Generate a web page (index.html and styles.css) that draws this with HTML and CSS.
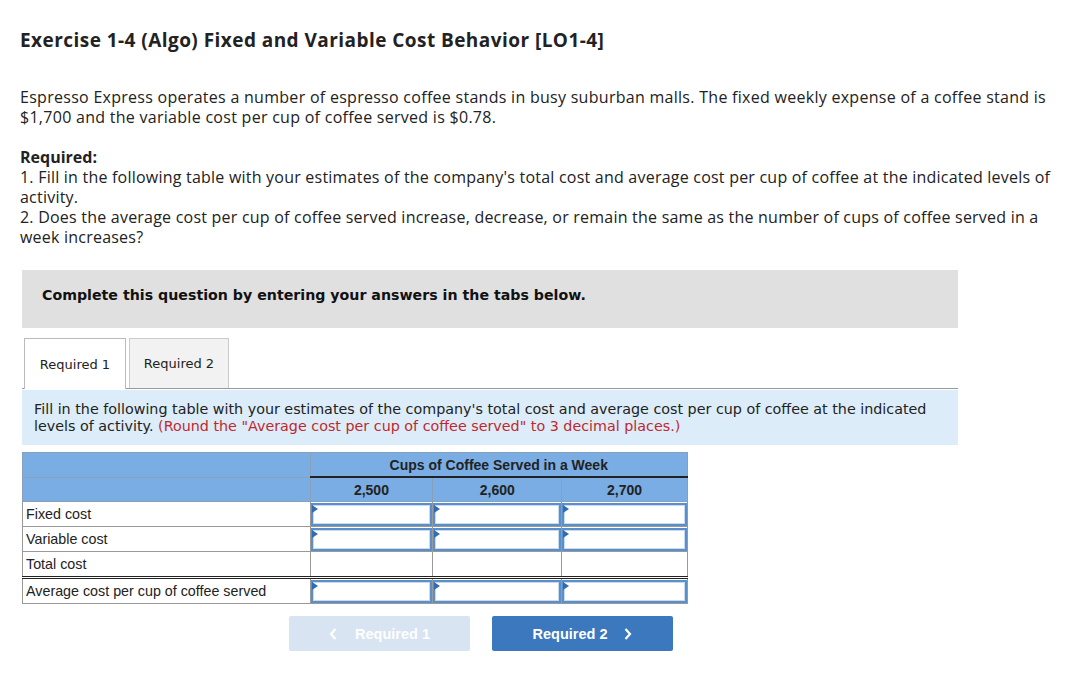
FILE: index.html
```html
<!DOCTYPE html>
<html>
<head>
<meta charset="utf-8">
<link rel="stylesheet" href="styles.css">
</head>
<body>
<div class="page">
  <h1 class="title">Exercise 1-4 (Algo) Fixed and Variable Cost Behavior [LO1-4]</h1>
  <p class="intro">Espresso Express operates a number of espresso coffee stands in busy suburban malls. The fixed weekly expense of a coffee stand is $1,700 and the variable cost per cup of coffee served is $0.78.</p>
  <div class="required">
    <div class="req-head">Required:</div>
    <div>1. Fill in the following table with your estimates of the company's total cost and average cost per cup of coffee at the indicated levels of activity.</div>
    <div>2. Does the average cost per cup of coffee served increase, decrease, or remain the same as the number of cups of coffee served in a week increases?</div>
  </div>
  <div class="panel">
    <div class="banner">Complete this question by entering your answers in the tabs below.</div>
    <div class="tabs">
      <div class="tab active">Required 1</div>
      <div class="tab">Required 2</div>
    </div>
    <div class="instruction">Fill in the following table with your estimates of the company's total cost and average cost per cup of coffee at the indicated levels of activity. <span class="red">(Round the "Average cost per cup of coffee served" to 3 decimal places.)</span></div>
    <table class="grid">
      <colgroup><col class="c0"><col class="c1"><col class="c2"><col class="c3"></colgroup>
      <tr class="h1"><th></th><th colspan="3" class="span">Cups of Coffee Served in a Week</th></tr>
      <tr class="h2"><th></th><th>2,500</th><th>2,600</th><th>2,700</th></tr>
      <tr><td class="lbl">Fixed cost</td><td class="in"><div class="box"></div></td><td class="in"><div class="box"></div></td><td class="in"><div class="box"></div></td></tr>
      <tr><td class="lbl">Variable cost</td><td class="in"><div class="box"></div></td><td class="in"><div class="box"></div></td><td class="in"><div class="box"></div></td></tr>
      <tr class="total"><td class="lbl">Total cost</td><td></td><td></td><td></td></tr>
      <tr class="avg"><td class="lbl">Average cost per cup of coffee served</td><td class="in"><div class="box"></div></td><td class="in"><div class="box"></div></td><td class="in"><div class="box"></div></td></tr>
    </table>
    <div class="nav">
      <div class="btn prev"><svg class="chev left" width="8" height="12" viewBox="0 0 8 12"><path d="M6.5 1 L2 6 L6.5 11" fill="none" stroke="#fff" stroke-width="2.2"/></svg>Required 1</div>
      <div class="btn next">Required 2<svg class="chev right" width="8" height="12" viewBox="0 0 8 12"><path d="M1.5 1 L6 6 L1.5 11" fill="none" stroke="#fff" stroke-width="2.2"/></svg></div>
    </div>
  </div>
</div>
</body>
</html>
```
FILE: styles.css
```css
html, body { margin: 0; padding: 0; background: #fff; }
.page { padding: 28px 14px 0 20px; font-family: "Open Sans", "Liberation Sans", sans-serif; color: #222; }
.title { font-size: 19px; font-weight: 700; margin: 0; line-height: 24px; letter-spacing: 0.45px; }
.intro { font-size: 16px; line-height: 20px; margin: 35px 0 0 0; letter-spacing: 0.28px; }
.required { font-size: 16px; line-height: 20px; margin-top: 20px; letter-spacing: 0.22px; }
.req-head { font-weight: 700; letter-spacing: 0; }
.panel { margin-top: 23px; width: 936px; margin-left: 2px; }
.banner { background: #e0e0e0; height: 58px; box-sizing: border-box; padding: 15px 20px; font-family: "DejaVu Sans", Verdana, sans-serif; font-size: 14.2px; font-weight: 700; color: #111; line-height: 20px; }
.tabs { display: flex; margin-top: 10px; border-bottom: 1px solid #999; height: 50px; padding-left: 2px; gap: 3px; }
.tab { width: 100px; height: 50px; box-sizing: border-box; border: 1px solid #ccc; border-bottom: none; background: #f2f2f2; font-family: "DejaVu Sans", Verdana, sans-serif; font-size: 13px; color: #222; display: flex; align-items: center; justify-content: center; }
.tab.active { background: #fff; border-color: #bbb; height: 51px; margin-bottom: -1px; width: 102px; }
.instruction { background: #dcedf9; margin-top: 1px; padding: 11px 12px 10px 12px; font-family: "DejaVu Sans", Tahoma, sans-serif; font-size: 14.3px; line-height: 17px; color: #222; }
.red { color: #c0282d; }
.grid { border-collapse: collapse; margin-top: 7px; font-family: "Liberation Sans", Arial, sans-serif; font-size: 14.3px; color: #222; width: 666px; }
.c0 { width: 288px; } .c1 { width: 123px; } .c2 { width: 129px; } .c3 { width: 126px; }
.grid th { background: #79ade3; font-weight: 700; font-size: 14px; height: 23px; padding: 0; border: 1px solid #8aa0b8; line-height: 16px; }
.grid .h1 th.span { border-bottom: 2px solid #222; }
.grid .h1 th:first-child { border-bottom: 1px solid #8aa0b8; }
.grid td { border: 1px solid #999; height: 24px; padding: 0; background: #fff; line-height: 16px; }
.grid td.lbl { padding-left: 3px; }
.grid .total td { border-bottom: 3px double #222; }
.grid td.in { padding: 0; }
.box { height: 23px; border: 2px solid #5b8fca; box-sizing: border-box; position: relative; box-shadow: inset 0 0 0 1px #c8daf0; }
.box::before { content: ""; position: absolute; left: -1px; top: 0; border-left: 6px solid #2f6cb5; border-top: 4px solid transparent; border-bottom: 4px solid transparent; }
.nav { display: flex; gap: 22px; margin-top: 12px; margin-left: 267px; }
.btn { width: 181px; height: 35px; box-sizing: border-box; border-radius: 2px; font-family: "Liberation Sans", Arial, sans-serif; font-size: 14.5px; font-weight: 700; color: #fff; display: flex; align-items: center; justify-content: center; }
.btn.prev { background: #d8e4f2; }
.btn.next { background: #3b78bd; }
.chev { display: block; }
.chev.left { margin-right: 18px; }
.chev.right { margin-left: 17px; }
```
